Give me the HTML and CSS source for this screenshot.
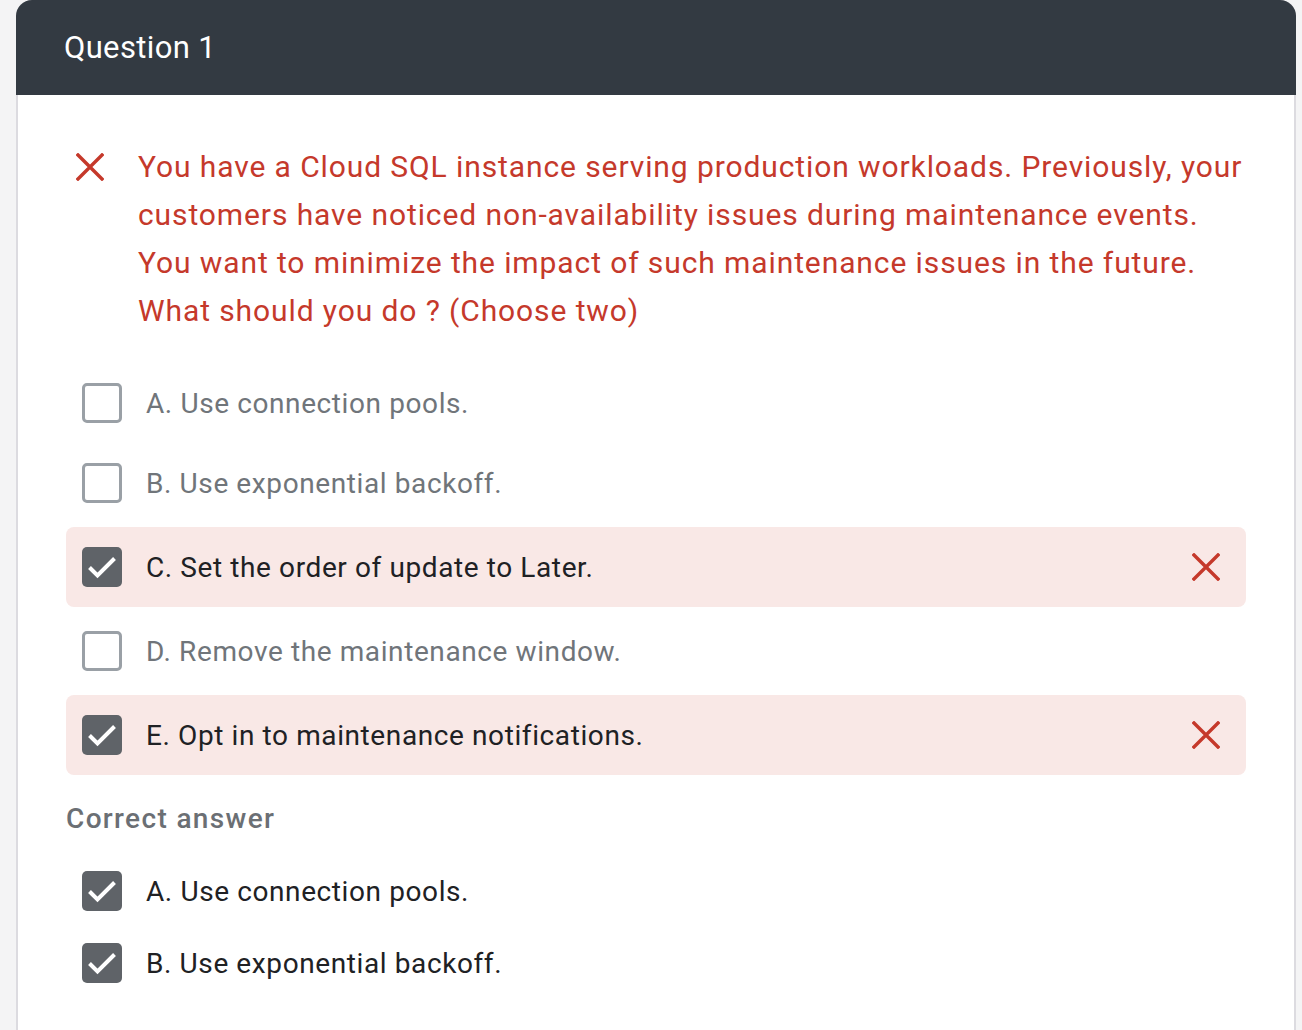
FILE: index.html
```html
<!DOCTYPE html>
<html>
<head>
<meta charset="utf-8">
<link rel="stylesheet" href="styles.css">
</head>
<body>
<div class="card">
  <div class="card-header">Question 1</div>
  <div class="card-body">
    <div class="question">
      <div class="q-icon">
        <svg width="28" height="28" viewBox="0 0 28 28"><path d="M2 2 L26 26 M26 2 L2 26" stroke="#c5392b" stroke-width="3.4" stroke-linecap="square" fill="none"/></svg>
      </div>
      <div class="q-text">You have a Cloud SQL instance serving production workloads. Previously, your customers have noticed non-availability issues during maintenance events. You want to minimize the impact of such maintenance issues in the future. What should you do ? (Choose two)</div>
    </div>

    <div class="options">
      <div class="option">
        <span class="box"></span>
        <span class="label">A. Use connection pools.</span>
      </div>
      <div class="option">
        <span class="box"></span>
        <span class="label">B. Use exponential backoff.</span>
      </div>
      <div class="option option-wrong">
        <span class="box box-checked"><svg width="40" height="40" viewBox="0 0 40 40"><path d="M7.5 20.5 L15.5 28.5 L32.5 11.5" stroke="#fff" stroke-width="4" fill="none"/></svg></span>
        <span class="label">C. Set the order of update to Later.</span>
        <span class="wrong-mark"><svg width="28" height="28" viewBox="0 0 28 28"><path d="M2 2 L26 26 M26 2 L2 26" stroke="#c5392b" stroke-width="3.4" stroke-linecap="square" fill="none"/></svg></span>
      </div>
      <div class="option">
        <span class="box"></span>
        <span class="label">D. Remove the maintenance window.</span>
      </div>
      <div class="option option-wrong">
        <span class="box box-checked"><svg width="40" height="40" viewBox="0 0 40 40"><path d="M7.5 20.5 L15.5 28.5 L32.5 11.5" stroke="#fff" stroke-width="4" fill="none"/></svg></span>
        <span class="label">E. Opt in to maintenance notifications.</span>
        <span class="wrong-mark"><svg width="28" height="28" viewBox="0 0 28 28"><path d="M2 2 L26 26 M26 2 L2 26" stroke="#c5392b" stroke-width="3.4" stroke-linecap="square" fill="none"/></svg></span>
      </div>
    </div>

    <div class="correct-title">Correct answer</div>
    <div class="correct-list">
      <div class="correct-item">
        <span class="box box-checked"><svg width="40" height="40" viewBox="0 0 40 40"><path d="M7.5 20.5 L15.5 28.5 L32.5 11.5" stroke="#fff" stroke-width="4" fill="none"/></svg></span>
        <span class="label label-dark">A. Use connection pools.</span>
      </div>
      <div class="correct-item">
        <span class="box box-checked"><svg width="40" height="40" viewBox="0 0 40 40"><path d="M7.5 20.5 L15.5 28.5 L32.5 11.5" stroke="#fff" stroke-width="4" fill="none"/></svg></span>
        <span class="label label-dark">B. Use exponential backoff.</span>
      </div>
    </div>
  </div>
</div>
</body>
</html>
```

FILE: styles.css
```css
html, body {
  margin: 0;
  padding: 0;
  background: #f4f4f5;
  font-family: Roboto, "Noto Sans", Arial, sans-serif;
}

body {
  padding: 0 6px 0 16px;
}

.card {
  width: 1280px;
  min-height: 1030px;
  background: #ffffff;
  border-radius: 16px 16px 0 0;
  box-sizing: border-box;
  border-left: 2px solid #dcdbe0;
  border-right: 2px solid #dcdbe0;
}

.card-header {
  height: 95px;
  margin: 0 -2px;
  background: #333a42;
  border-radius: 16px 16px 0 0;
  color: #ffffff;
  font-size: 31px;
  letter-spacing: 0.35px;
  line-height: 95px;
  padding-left: 48px;
}

.card-body {
  padding: 48px 48px 0 48px;
}

.question {
  display: flex;
  align-items: flex-start;
}

.q-icon {
  width: 72px;
  flex: none;
  padding-left: 10px;
  padding-top: 10px;
  box-sizing: border-box;
}

.q-icon svg {
  display: block;
}

.q-text {
  color: #c5392b;
  font-size: 30px;
  letter-spacing: 0.9px;
  line-height: 48px;
}

.options {
  margin-top: 28px;
  display: flex;
  flex-direction: column;
}

.option {
  display: flex;
  align-items: center;
  height: 80px;
  padding-left: 16px;
  padding-right: 26px;
  border-radius: 8px;
}

.option-wrong {
  background: #f9e8e6;
  margin: 4px 0;
}

.box {
  width: 40px;
  height: 40px;
  flex: none;
  box-sizing: border-box;
  border: 3px solid #9aa0a6;
  border-radius: 5px;
  display: flex;
  align-items: center;
  justify-content: center;
}

.box-checked {
  border: none;
  background: #5f6368;
}

.box svg {
  display: block;
}

.label {
  margin-left: 24px;
  font-size: 28px;
  letter-spacing: 0.6px;
  color: #70757a;
  flex: 1;
}

.option-wrong .label,
.label-dark {
  color: #202124;
}

.wrong-mark {
  display: flex;
  flex: none;
}

.correct-title {
  margin-top: 22px;
  font-size: 28px;
  font-weight: 500;
  color: #6b6f74;
  line-height: 36px;
  letter-spacing: 1.35px;
}

.correct-list {
  margin-top: 18px;
  display: flex;
  flex-direction: column;
}

.correct-item {
  display: flex;
  align-items: center;
  height: 72px;
  padding-left: 16px;
}
```
